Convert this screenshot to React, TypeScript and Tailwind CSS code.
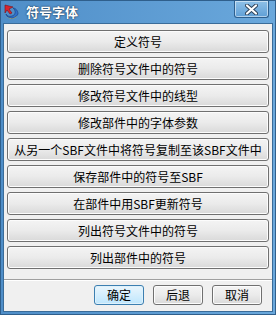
import React from "react";

const items = [
  "定义符号",
  "删除符号文件中的符号",
  "修改符号文件中的线型",
  "修改部件中的字体参数",
  "从另一个SBF文件中将符号复制至该SBF文件中",
  "保存部件中的符号至SBF",
  "在部件中用SBF更新符号",
  "列出符号文件中的符号",
  "列出部件中的符号",
];

const font = { fontFamily: '"Noto Sans CJK SC", "Noto Sans", sans-serif' };

const AppIcon = () => (
  <svg width="17" height="17" viewBox="0 0 17 17">
    <path d="M2 1 L10 3 L6 5 L9 9 L7 10 L4 6 L2 9 Z" fill="#d8252e" stroke="#7a1016" strokeWidth="0.6" />
    <path d="M3 10 C4 15 12 16 15 10 C15 6 12 4 10 4 C13 6 13 11 9 12 C6 13 4 12 3 10 Z" fill="#2f6fc8" stroke="#173b7a" strokeWidth="0.6" />
    <path d="M4 13 C7 16 12 15 14 12 C11 15 7 15 4 13 Z" fill="#e8c33a" />
  </svg>
);

const CloseButton = () => (
  <div className="w-[35px] h-[17px] rounded-b-[3px] border border-t-0 border-[#2d5f8e] bg-gradient-to-b from-[#8fc1e8] to-[#5f9fd6] flex items-center justify-center shadow-[inset_0_0_0_1px_rgba(255,255,255,0.5)]">
    <svg width="13" height="11" viewBox="0 0 13 11">
      <path d="M2 1.5 L11 9.5 M11 1.5 L2 9.5" stroke="#2c3f55" strokeWidth="4" strokeLinecap="round" />
      <path d="M2 1.5 L11 9.5 M11 1.5 L2 9.5" stroke="#ffffff" strokeWidth="2.2" strokeLinecap="round" />
    </svg>
  </div>
);

export default function App() {
  return (
    <div
      className="w-[276px] h-[315px] bg-gradient-to-r from-[#4f8ec8] to-[#6aa8dc] flex flex-col border border-[#2f5f8c]"
      style={font}
    >
      {/* Title bar */}
      <div className="h-[22px] flex items-start pl-[2px] pr-[6px] shrink-0">
        <div className="pt-[3px]">
          <AppIcon />
        </div>
        <span className="ml-[6px] mt-[3px] text-[13px] leading-[16px] font-bold text-white [text-shadow:0_0_2px_#1d3c5c,0_0_1px_#1d3c5c]">
          符号字体
        </span>
        <div className="ml-auto">
          <CloseButton />
        </div>
      </div>

      {/* Body */}
      <div className="flex-1 mx-[2px] mb-[2px] bg-[#f0f0f0] border border-[#3a6c99] flex flex-col text-black">
        <div className="flex flex-col gap-[4px] px-[3px] pt-[6px]">
          {items.map((t) => (
            <button
              key={t}
              className="h-[23px] w-full rounded-[3px] border border-[#707070] bg-gradient-to-b from-[#f4f4f4] via-[#ebebeb] to-[#d9d9d9] text-[12px] leading-[21px] shadow-[inset_0_0_0_1px_#fcfcfc] whitespace-nowrap"
            >
              {t}
            </button>
          ))}
        </div>

        <div className="mt-[10px] mx-0 border-t border-[#a0a0a0] border-b border-b-white" />

        <div className="flex justify-end gap-[9px] pr-[10px] pt-[4px]">
          <button className="w-[50px] h-[20px] rounded-[3px] border border-[#3c7fb1] bg-gradient-to-b from-[#eaf6fd] to-[#bee6fd] text-[12px] leading-[18px] shadow-[inset_0_0_0_1px_#dff1fb]">
            确定
          </button>
          <button className="w-[50px] h-[20px] rounded-[3px] border border-[#707070] bg-gradient-to-b from-[#f4f4f4] via-[#ebebeb] to-[#d9d9d9] text-[12px] leading-[18px] shadow-[inset_0_0_0_1px_#fcfcfc]">
            后退
          </button>
          <button className="w-[50px] h-[20px] rounded-[3px] border border-[#707070] bg-gradient-to-b from-[#f4f4f4] via-[#ebebeb] to-[#d9d9d9] text-[12px] leading-[18px] shadow-[inset_0_0_0_1px_#fcfcfc]">
            取消
          </button>
        </div>
      </div>
    </div>
  );
}
